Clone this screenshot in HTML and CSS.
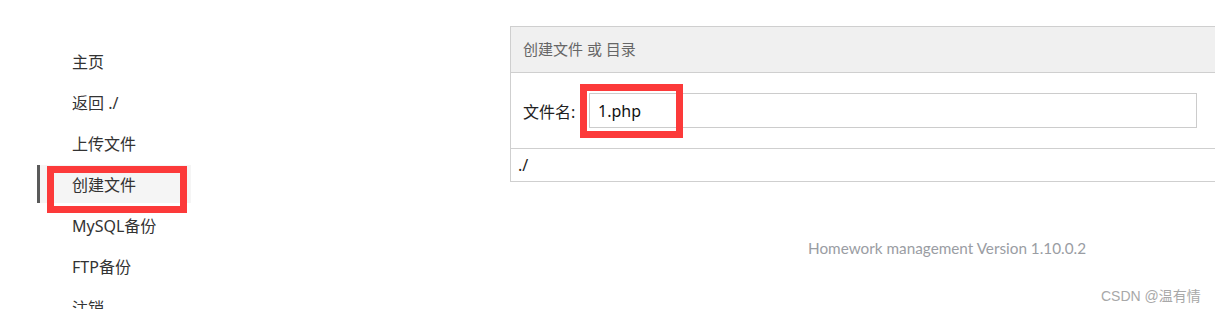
FILE: index.html
```html
<!DOCTYPE html>
<html lang="zh-CN">
<head>
<meta charset="utf-8">
<title>创建文件</title>
<link rel="stylesheet" href="styles.css">
</head>
<body>
<div class="page">
  <aside class="sidebar">
    <ul class="nav">
      <li class="nav-item">主页</li>
      <li class="nav-item">返回 ./</li>
      <li class="nav-item">上传文件</li>
      <li class="nav-item active">创建文件<span class="mark mark-nav"></span></li>
      <li class="nav-item">MySQL备份</li>
      <li class="nav-item">FTP备份</li>
      <li class="nav-item">注销</li>
    </ul>
  </aside>
  <main class="main">
    <section class="panel">
      <div class="panel-head">创建文件 或 目录</div>
      <div class="panel-body">
        <label class="field-label">文件名:</label>
        <div class="field-wrap">
          <input class="field" type="text" value="1.php">
          <span class="mark mark-input"></span>
        </div>
      </div>
      <div class="panel-path">./</div>
    </section>
    <footer class="footer">Homework management Version 1.10.0.2</footer>
  </main>
</div>
<div class="watermark">CSDN @温有情</div>
</body>
</html>
```

FILE: styles.css
```css
html, body {
  margin: 0;
  padding: 0;
  overflow: hidden;
  background: #fff;
}
body {
  font-family: "Noto Sans", "Noto Sans CJK SC", sans-serif;
  color: #333;
  width: 1215px;
  height: 309px;
  position: relative;
}
.page {
  display: flex;
  align-items: flex-start;
}
.sidebar {
  width: 510px;
  flex: none;
  padding-top: 42px;
}
.nav {
  list-style: none;
  margin: 0 0 0 37px;
  padding: 0;
  width: 154px;
}
.nav-item {
  position: relative;
  height: 38px;
  line-height: 40px;
  margin-bottom: 3px;
  padding-left: 32px;
  font-size: 16px;
  color: #333;
  border-left: 3px solid transparent;
}
.nav-item.active {
  background: #f5f5f5;
  border-left-color: #5a5a5a;
}
.mark {
  position: absolute;
  border: 7px solid #fc3a3a;
  box-sizing: border-box;
  pointer-events: none;
}
.mark-nav {
  left: 7px;
  top: 1px;
  width: 140px;
  height: 47px;
}
.main {
  width: 874px;
  flex: none;
  padding-top: 26px;
}
.panel {
  border: 1px solid #cfcfcf;
}
.panel-head {
  height: 45px;
  line-height: 45px;
  padding-left: 12px;
  background: #f0f0f0;
  border-bottom: 1px solid #cfcfcf;
  font-size: 15px;
  color: #666;
}
.panel-body {
  display: flex;
  align-items: center;
  padding: 20px 12px;
  border-bottom: 1px solid #cfcfcf;
}
.field-label {
  width: 66px;
  flex: none;
  font-size: 16px;
  color: #222;
}
.field-wrap {
  position: relative;
}
.field {
  display: block;
  box-sizing: border-box;
  width: 608px;
  height: 35px;
  border: 1px solid #cccccc;
  padding: 0 8px;
  font-family: "Noto Sans", "Noto Sans CJK SC", sans-serif;
  font-size: 16px;
  color: #111;
  outline: none;
  margin: 0;
}
.mark-input {
  left: -9px;
  top: -9px;
  width: 103px;
  height: 54px;
}
.panel-path {
  height: 32px;
  line-height: 32px;
  padding-left: 7px;
  font-size: 16px;
  color: #222;
}
.footer {
  margin-top: 57px;
  text-align: center;
  font-family: Lato, "Open Sans", sans-serif;
  font-size: 15.3px;
  color: #9a9da3;
}
.watermark {
  position: absolute;
  left: 1101px;
  top: 285px;
  font-family: "Liberation Sans", "Noto Sans CJK SC", sans-serif;
  font-size: 14px;
  color: #a8a8a8;
}
```
